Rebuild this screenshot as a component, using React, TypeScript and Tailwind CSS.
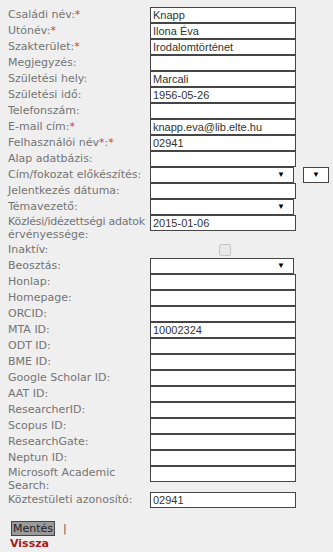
import React from "react";

const LBL = "font-['DejaVu_Sans',Verdana,sans-serif] text-[11px] text-[#747474] whitespace-nowrap";
const INP = "font-['Liberation_Sans',Arial,sans-serif] text-[11px] text-[#333] bg-white border border-[#454545] h-[16px] leading-[14px] px-[2px] box-border";

function Star() {
  return <span className="text-[#c24545]">*</span>;
}

function Label({ children, two }: { children: React.ReactNode; two?: boolean }) {
  return (
    <div className={`w-[142px] shrink-0 ${LBL} ${two ? "leading-[13px]" : "leading-[16px]"}`}>{children}</div>
  );
}

function TextInput({ value = "" }: { value?: string }) {
  return <div className={`${INP} w-[146px] overflow-hidden whitespace-nowrap`}>{value}</div>;
}

function Select({ w = 144 }: { w?: number }) {
  return (
    <div
      className={`${INP} flex items-center justify-end pr-[8px]`}
      style={{ width: w }}
    >
      <span className="text-[8px] leading-none text-black">▼</span>
    </div>
  );
}

function Row({ label, two, children, cls = "" }: { label: React.ReactNode; two?: boolean; children?: React.ReactNode; cls?: string }) {
  return (
    <div className={`flex items-start ${cls}`}>
      <Label two={two}>{label}</Label>
      <div className="flex items-start">{children}</div>
    </div>
  );
}

export default function App() {
  return (
    <div className="w-[333px] h-[552px] bg-[#efefef] pl-[8px] pt-[7px] overflow-hidden">
      <Row label={<>Családi név:<Star /></>}><TextInput value="Knapp" /></Row>
      <Row label={<>Utónév:<Star /></>}><TextInput value="Ilona Éva" /></Row>
      <Row label={<>Szakterület:<Star /></>}><TextInput value="Irodalomtörténet" /></Row>
      <Row label="Megjegyzés:"><TextInput /></Row>
      <Row label="Születési hely:"><TextInput value="Marcali" /></Row>
      <Row label="Születési idő:"><TextInput value="1956-05-26" /></Row>
      <Row label="Telefonszám:"><TextInput /></Row>
      <Row label={<>E-mail cím:<Star /></>}><TextInput value="knapp.eva@lib.elte.hu" /></Row>
      <Row label={<>Felhasználói név<Star />:<Star /></>}><TextInput value="02941" /></Row>
      <Row label="Alap adatbázis:"><TextInput /></Row>
      <Row label="Cím/fokozat előkészítés:">
        <Select />
        <div className="ml-[9px]"><Select w={26} /></div>
      </Row>
      <Row label="Jelentkezés dátuma:"><TextInput /></Row>
      <Row label="Témavezető:"><Select /></Row>
      <Row label={<><span className="tracking-[-0.25px]">Közlési/idézettségi adatok</span><br />érvényessége:</>} two cls="pb-[1px]"><TextInput value="2015-01-06" /></Row>
      <div className="flex items-center h-[16px]">
        <Label>Inaktív:</Label>
        <div className="w-[146px] flex justify-center">
          <div className="w-[12px] h-[12px] ml-[3px] rounded-[2px] border border-[#c4c4c4] bg-[#e9e9e9]" />
        </div>
      </div>
      <Row label="Beosztás:"><Select /></Row>
      <Row label="Honlap:"><TextInput /></Row>
      <Row label="Homepage:"><TextInput /></Row>
      <Row label="ORCID:"><TextInput /></Row>
      <Row label="MTA ID:"><TextInput value="10002324" /></Row>
      <Row label="ODT ID:"><TextInput /></Row>
      <Row label="BME ID:"><TextInput /></Row>
      <Row label="Google Scholar ID:"><TextInput /></Row>
      <Row label="AAT ID:"><TextInput /></Row>
      <Row label="ResearcherID:"><TextInput /></Row>
      <Row label="Scopus ID:"><TextInput /></Row>
      <Row label="ResearchGate:"><TextInput /></Row>
      <Row label="Neptun ID:"><TextInput /></Row>
      <Row label={<>Microsoft Academic<br />Search:</>} two><TextInput /></Row>
      <Row label="Köztestületi azonosító:"><TextInput value="02941" /></Row>
      <div className="pl-[3px] pt-[13px] flex items-center">
        <span className="font-['DejaVu_Sans',Verdana,sans-serif] text-[11px] leading-[13px] text-[#222] bg-[#9a9a9a] border border-[#444] px-[1px]">Mentés</span>
        <span className="font-['DejaVu_Sans',Verdana,sans-serif] text-[11px] leading-[13px] text-[#555] ml-[8px]">|</span>
      </div>
      <div className="pl-[2px] pt-[1px] font-['DejaVu_Sans',Verdana,sans-serif] text-[11px] leading-[13px] font-bold text-[#a51d1d]">Vissza</div>
    </div>
  );
}
